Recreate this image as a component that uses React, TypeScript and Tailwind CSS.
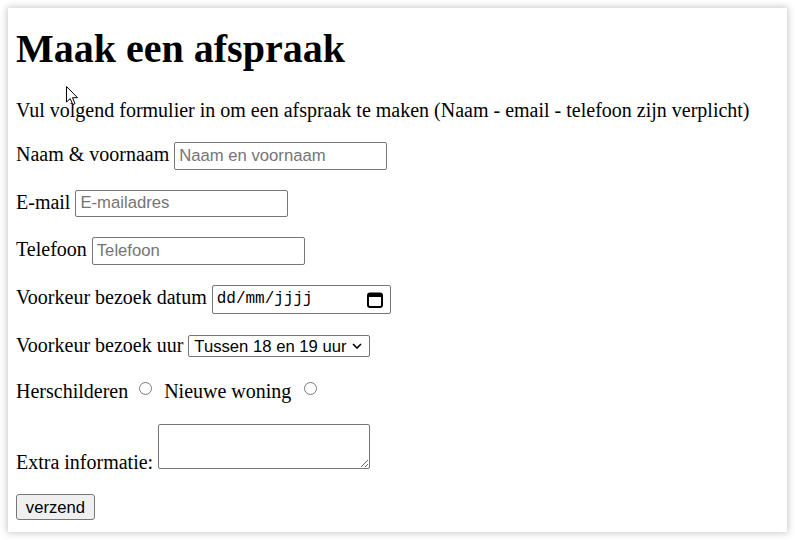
import React from "react";

const sans = "font-['Liberation_Sans',Arial,sans-serif]";
const field = `${sans} w-[213px] h-[27.5px] border border-[#767676] rounded-[2px] px-[4px] text-[16.67px] align-baseline placeholder:text-[#757575]`;

const CalendarIcon = () => (
  <svg width="16" height="17" viewBox="0 0 16 17" className="shrink-0">
    <rect x="1" y="2.5" width="14" height="13.5" rx="2" fill="none" stroke="black" strokeWidth="2" />
    <rect x="1" y="2.5" width="14" height="3.5" fill="black" />
  </svg>
);

const Chevron = () => (
  <svg width="10" height="6" viewBox="0 0 10 6" className="shrink-0">
    <path d="M1 1 L5 5 L9 1" fill="none" stroke="black" strokeWidth="1.6" />
  </svg>
);

const Radio = ({ className }: { className: string }) => (
  <span
    className={`inline-block w-[13px] h-[13px] mb-[3px] rounded-full border border-[#7a7a7a] bg-white align-baseline ${className}`}
  />
);

const Cursor = () => (
  <svg
    width="13"
    height="20"
    viewBox="0 0 13 20"
    className="absolute left-[66px] top-[86px]"
  >
    <path
      d="M0.5 0.5 L0.5 16 L4.2 12.6 L6.8 18.6 L9 17.6 L6.5 11.7 L11.5 11.7 Z"
      fill="white"
      stroke="black"
      strokeWidth="1"
    />
  </svg>
);

export default function App() {
  return (
    <div className="relative w-[795px] h-[540px] bg-white p-2">
      <div className="h-[524px] bg-white shadow-[0_0_7px_1px_rgba(0,0,0,0.22)] px-2 pt-[18px] flex flex-col text-black font-['Liberation_Serif','Times_New_Roman',serif] text-[20px] leading-[23px]">
        <h1 className="text-[40px] leading-[46px] font-bold">Maak een afspraak</h1>

        <p className="mt-[27px]">
          Vul volgend formulier in om een afspraak te maken (Naam - email - telefoon zijn verplicht)
        </p>

        <div className="mt-5">
          Naam &amp; voornaam{" "}
          <input type="text" placeholder="Naam en voornaam" className={field} />
        </div>

        <div className="mt-5">
          E-mail <input type="email" placeholder="E-mailadres" className={field} />
        </div>

        <div className="mt-5">
          Telefoon <input type="tel" placeholder="Telefoon" className={field} />
        </div>

        <div className="mt-5">
          Voorkeur bezoek datum{" "}
          <span className="inline-flex items-center justify-between w-[179px] h-[29px] border border-[#767676] rounded-[2px] pl-[4px] pr-[7px] align-baseline font-['Liberation_Mono','Courier_New',monospace] text-[16px] leading-[18px]">
            <span>dd/mm/jjjj</span>
            <CalendarIcon />
          </span>
        </div>

        <div className="mt-5">
          Voorkeur bezoek uur{" "}
          <span className={`${sans} inline-flex items-center justify-between w-[182px] h-[22px] border border-[#767676] rounded-[2px] pl-[5px] pr-[7px] align-baseline text-[16.67px] leading-[19px]`}>
            <span>Tussen 18 en 19 uur</span>
            <Chevron />
          </span>
        </div>

        <div className="mt-[23px]">
          Herschilderen
          <Radio className="ml-[11px] mr-[12px]" />
          Nieuwe woning
          <Radio className="ml-[13px]" />
        </div>

        <div className="mt-[21px]">
          Extra informatie:{" "}
          <textarea className="w-[212px] h-[45px] border border-[#767676] rounded-[2px] align-baseline resize" />
        </div>

        <div className="mt-[20px]">
          <button
            type="button"
            className={`${sans} w-[79px] h-[26px] bg-[#efefef] border border-[#767676] rounded-[3px] text-[16.67px] leading-[19px]`}
          >
            verzend
          </button>
        </div>
      </div>
      <Cursor />
    </div>
  );
}
